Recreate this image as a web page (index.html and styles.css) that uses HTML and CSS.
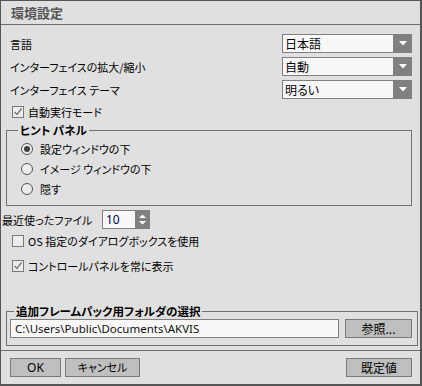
FILE: index.html
```html
<!DOCTYPE html>
<html lang="ja">
<head>
<meta charset="utf-8">
<title>環境設定</title>
<link rel="stylesheet" href="styles.css">
</head>
<body>
<div class="window">
  <div class="titlebar">環境設定</div>
  <div class="content">
    <div class="row">
      <span class="label">言語</span>
      <div class="combo"><span class="combo-text">日本語</span><span class="combo-btn"><svg width="8" height="5" viewBox="0 0 8 5"><path d="M0 0H8L4 4.5Z" fill="#fff"/></svg></span></div>
    </div>
    <div class="row">
      <span class="label">インターフェイスの拡大/縮小</span>
      <div class="combo"><span class="combo-text">自動</span><span class="combo-btn"><svg width="8" height="5" viewBox="0 0 8 5"><path d="M0 0H8L4 4.5Z" fill="#fff"/></svg></span></div>
    </div>
    <div class="row">
      <span class="label">インターフェイス テーマ</span>
      <div class="combo"><span class="combo-text">明るい</span><span class="combo-btn"><svg width="8" height="5" viewBox="0 0 8 5"><path d="M0 0H8L4 4.5Z" fill="#fff"/></svg></span></div>
    </div>
    <div class="check check-auto">
      <span class="box"><svg width="10" height="10" viewBox="0 0 10 10"><path d="M1.5 5L4 7.5L8.5 1.5" fill="none" stroke="#777" stroke-width="1.3"/></svg></span>
      <span>自動実行モード</span>
    </div>
    <fieldset class="group hint">
      <legend>ヒント パネル</legend>
      <div class="radio"><span class="circle on"></span><span>設定ウィンドウの下</span></div>
      <div class="radio"><span class="circle"></span><span>イメージ ウィンドウの下</span></div>
      <div class="radio"><span class="circle"></span><span>隠す</span></div>
    </fieldset>
    <div class="recent">
      <span class="label recent-label">最近使ったファイル</span>
      <div class="spin"><span class="spin-val">10</span><span class="spin-btn"><svg width="7" height="11" viewBox="0 0 7 11"><path d="M0 4H7L3.5 0.5Z M0 7H7L3.5 10.5Z" fill="#fff"/></svg></span></div>
    </div>
    <div class="check check-os">
      <span class="box"></span>
      <span>OS 指定のダイアログボックスを使用</span>
    </div>
    <div class="check check-panel">
      <span class="box"><svg width="10" height="10" viewBox="0 0 10 10"><path d="M1.5 5L4 7.5L8.5 1.5" fill="none" stroke="#777" stroke-width="1.3"/></svg></span>
      <span>コントロールパネルを常に表示</span>
    </div>
    <fieldset class="group folder">
      <legend>追加フレームパック用フォルダの選択</legend>
      <div class="path-row">
        <div class="path">C:\Users\Public\Documents\AKVIS</div>
        <button class="btn browse">参照...</button>
      </div>
    </fieldset>
  </div>
  <div class="footer">
    <button class="btn ok">OK</button>
    <button class="btn cancel">キャンセル</button>
    <span class="spacer"></span>
    <button class="btn default">既定値</button>
  </div>
</div>
</body>
</html>
```

FILE: styles.css
```css
* { box-sizing: border-box; }
html, body { margin: 0; padding: 0; background: #e0e0e0; }
body {
  font-family: "Noto Sans CJK JP", "Noto Sans", sans-serif;
  font-size: 11px;
  color: #000;
  font-feature-settings: "palt";
}
.window {
  width: 422px;
  height: 386px;
  border: 1px solid #555;
  border-right-width: 2px;
  border-bottom-width: 2px;
  background: #e0e0e0;
  display: flex;
  flex-direction: column;
}
.titlebar {
  height: 24px;
  line-height: 23px;
  border-bottom: 1px solid #6e6e6e;
  padding-left: 10px;
  font-weight: bold;
  font-size: 13px;
  color: #555;
}
.content {
  flex: 1;
  padding: 9px 8px 0 9px;
  display: flex;
  flex-direction: column;
}
.row {
  height: 19px;
  margin-bottom: 4px;
  display: flex;
  justify-content: space-between;
  align-items: center;
}
.label { line-height: 16px; }
.combo {
  width: 130px;
  height: 19px;
  display: flex;
  background: #f8f8f8;
  border: 1px solid #808080;
}
.combo-text {
  flex: 1;
  padding-left: 2px;
  line-height: 17px;
  font-size: 12px;
}
.combo-btn {
  width: 19px;
  margin: -1px -1px -1px 0;
  background: #808080;
  display: flex;
  align-items: center;
  justify-content: center;
}
.check {
  height: 18px;
  display: flex;
  align-items: center;
  gap: 4px;
  padding-left: 2px;
}
.box {
  width: 12px;
  height: 12px;
  border: 1px solid #7a7a7a;
  background: #ececec;
  display: flex;
  align-items: center;
  justify-content: center;
}
.group {
  margin: 0;
  padding: 0;
  border: 1px solid #707070;
  min-width: 0;
}
.group legend {
  font-weight: bold;
  font-size: 11.5px;
  padding: 0 2px;
  line-height: 16px;
}
.hint {
  margin: 1px 0 0 -4px;
  padding: 1px 0 6px 14px;
}
.hint legend { margin-left: -3px; }
.radio {
  height: 20px;
  display: flex;
  align-items: center;
  gap: 7px;
}
.circle {
  width: 12px;
  height: 12px;
  border-radius: 50%;
  border: 1px solid #555;
  background: #ececec;
  display: flex;
  align-items: center;
  justify-content: center;
}
.circle.on::after {
  content: "";
  width: 6px;
  height: 6px;
  border-radius: 50%;
  background: #404040;
}
.recent {
  margin: 4px 0 0 -8px;
  height: 19px;
  display: flex;
  align-items: center;
  gap: 5px;
}
.recent-label { width: 95px; }
.spin {
  width: 48px;
  height: 19px;
  display: flex;
  border: 1px solid #808080;
  background: #f8f8f8;
}
.spin-val {
  flex: 1;
  padding-left: 3px;
  line-height: 17px;
  font-family: "Noto Sans", sans-serif;
  font-size: 12px;
  color: #000050;
}
.spin-btn {
  width: 15px;
  margin: -1px -1px -1px 0;
  background: #808080;
  display: flex;
  align-items: center;
  justify-content: center;
}
.check-os { margin-top: 3px; }
.check-panel { margin-top: 7px; }
.folder {
  margin: 28px -6px 0 -4px;
  padding: 0 5px 7px 3px;
}
.folder legend { margin-left: 4px; }
.path-row {
  display: flex;
  gap: 6px;
}
.path {
  flex: 1;
  height: 19px;
  border: 1px solid #808080;
  background: #f8f8f8;
  padding-left: 4px;
  line-height: 17px;
  font-family: "Noto Sans", sans-serif;
  font-size: 11.5px;
  color: #111;
}
.btn {
  height: 19px;
  padding: 0;
  margin: 0;
  border: 1px solid #7a7a7a;
  background: #bfbfbf;
  font-family: "Noto Sans CJK JP", "Noto Sans", sans-serif;
  font-feature-settings: "palt";
  font-size: 12px;
  line-height: 17px;
  color: #000;
}
.browse { width: 67px; }
.footer {
  border-top: 1px solid #6e6e6e;
  padding: 7px 8px 0 9px;
  height: 34px;
  display: flex;
  gap: 4px;
}
.ok { width: 51px; font-family: "Noto Sans", sans-serif; }
.cancel { width: 75px; font-size: 11px; }
.spacer { flex: 1; }
.default { width: 66px; }
```
